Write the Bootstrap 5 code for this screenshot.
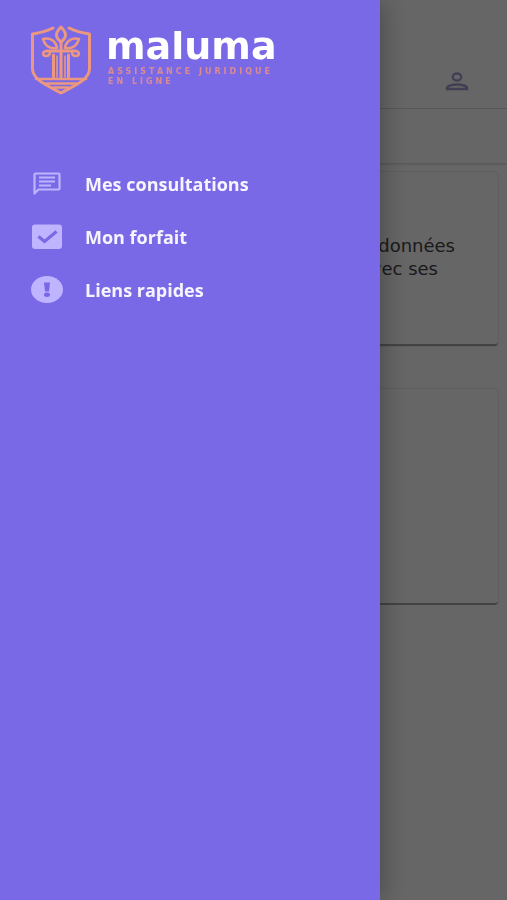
<!DOCTYPE html>
<html lang="fr">
<head>
<meta charset="utf-8">
<meta name="viewport" content="width=device-width, initial-scale=1">
<title>maluma</title>
<link href="https://cdn.jsdelivr.net/npm/bootstrap@5.3.0/dist/css/bootstrap.min.css" rel="stylesheet">
<style>
  body { font-family: "Open Sans", "Noto Sans", sans-serif; background: #fff; }
  .page-top { height: 109px; padding-right: 38px; padding-bottom: 16px; border-color: #e2e2e2 !important; }
  .page-sub { height: 54px; box-shadow: 0 1px 3px rgba(0,0,0,.2); }
  .user-btn { color: #a59ccf; line-height: 0; }
  .page-body { padding: 0 9px; }
  .panel { border-radius: 4px; border-bottom: 2px solid #a8a8a8; box-shadow: 0 0 2px rgba(0,0,0,.25); }
  .panel-a { min-height: 174px; margin-top: 9px; padding: 62px 43px 0 0; }
  .panel-b { min-height: 216px; margin-top: 43px; }
  .panel-copy { font-family: "DejaVu Sans", sans-serif; font-size: 18px; line-height: 23px; color: #444; }
  .line-short { padding-right: 17px; }
  .offcanvas-backdrop { transition: none; }
  .offcanvas-backdrop.show { opacity: .6; }
  .drawer.offcanvas { --bs-offcanvas-width: 75%; --bs-offcanvas-bg: #7969e6; border: 0; box-shadow: 0 0 28px rgba(0,0,0,.35); transition: none; }
  .brand { gap: 14px; padding: 25px 0 0 30px; color: #fff; }
  .brand-name { font: 700 38px/44px "DejaVu Sans", sans-serif; margin-top: -1px; }
  .brand-tag { font: 700 8px/10px "DejaVu Sans", sans-serif; letter-spacing: 3px; color: #da8b91; margin-left: 2px; margin-top: -1px; }
  .menu { padding: 62px 0 0 30px; }
  .menu-link { gap: 21px; height: 53px; padding: 0; color: #f6f4ff; font-size: 18px; font-weight: 700; line-height: 24px; }
  .menu-link:hover, .menu-link:focus { color: #fff; }
  .menu-link svg { flex: none; color: #beb4ff; }
</style>
<script src="https://cdn.jsdelivr.net/npm/bootstrap@5.3.0/dist/js/bootstrap.bundle.min.js"></script>
</head>
<body>
<header>
  <div class="page-top d-flex justify-content-end align-items-end border-bottom">
    <button type="button" class="user-btn btn p-0 border-0" aria-label="Mon compte">
      <svg width="24" height="20" viewBox="0 0 24 20" fill="none" stroke="currentColor" stroke-width="2.400"><ellipse cx="12" cy="5" rx="4.200" ry="3.500"/><path d="M2 17v-1c0-2 5-3.500 10-3.500s10 1.500 10 3.500v1z"/></svg>
    </button>
  </div>
  <div class="page-sub"></div>
</header>
<main class="page-body">
  <section class="panel panel-a text-end">
    <p class="panel-copy mb-0">données<br><span class="line-short">avec ses</span></p>
  </section>
  <section class="panel panel-b"></section>
</main>

<aside class="drawer offcanvas offcanvas-start show" tabindex="-1" aria-label="Menu principal">
  <a href="#" class="brand d-flex text-decoration-none">
    <svg width="62" height="70" viewBox="0 0 62 70" fill="none" stroke="#ec9880" stroke-width="3" stroke-linejoin="round" stroke-linecap="round" aria-hidden="true">
      <path d="M23 3C17 6 9 8 2.500 9v35C3 55 17 60 31 68c14-8 28-13 28.500-24V9C53 8 45 6 39 3"/>
      <path d="M31 2c-6 6-6 10 0 15 6-5 6-9 0-15z"/>
      <path d="M13 14c7-2 13 2 14 9-7 1-12-2-14-9zM49 14c-7-2-13 2-14 9 7 1 12-2 14-9z" stroke-width="2.600"/>
      <path d="M31 17v35M23.500 30v22M38.500 30v22" stroke-width="3"/>
      <path d="M27 31v21M35 31v21" stroke-width="1.500"/>
      <path d="M17 26h28" stroke-width="3"/>
      <path d="M17 26c-5 0-5 5-1 5 2 0 4-1 4-4M45 26c5 0 5 5 1 5-2 0-4-1-4-4" stroke-width="2.600"/>
      <path d="M6 54h50M15 58.500h32M24 62.500h14" stroke-width="2.600"/>
    </svg>
    <span class="d-flex flex-column">
      <span class="brand-name">maluma</span>
      <span class="brand-tag">ASSISTANCE JURIDIQUE<br>EN LIGNE</span>
    </span>
  </a>
  <nav class="menu nav flex-column" aria-label="Navigation">
    <a href="#" class="menu-link nav-link d-flex align-items-center">
      <svg width="34" height="28" viewBox="0 0 34 28" aria-hidden="true"><path d="M4.500 23.500V4.500q0-1 1-1h23q1 0 1 1v14q0 1-1 1H8.500z" fill="none" stroke="currentColor" stroke-width="2.200" stroke-linejoin="round"/><path d="M9 7.500h16M9 11.500h16M9 15.500h12" stroke="currentColor" stroke-width="2"/></svg>
      <span>Mes consultations</span>
    </a>
    <a href="#" class="menu-link nav-link d-flex align-items-center">
      <svg width="34" height="28" viewBox="0 0 34 28" aria-hidden="true"><rect x="2" y="1.500" width="30" height="24.500" rx="3" fill="currentColor"/><path d="M8.500 13.500l6 5 12-10" fill="none" stroke="#7969e6" stroke-width="3.200"/></svg>
      <span>Mon forfait</span>
    </a>
    <a href="#" class="menu-link nav-link d-flex align-items-center">
      <svg width="34" height="28" viewBox="0 0 34 28" aria-hidden="true"><ellipse cx="17" cy="13.500" rx="16" ry="13.500" fill="currentColor"/><path d="M14 6.500h6l-1 9h-4z" fill="#7969e6"/><ellipse cx="17" cy="18.800" rx="3" ry="2.200" fill="#7969e6"/></svg>
      <span>Liens rapides</span>
    </a>
  </nav>
</aside>
</body>
</html>
